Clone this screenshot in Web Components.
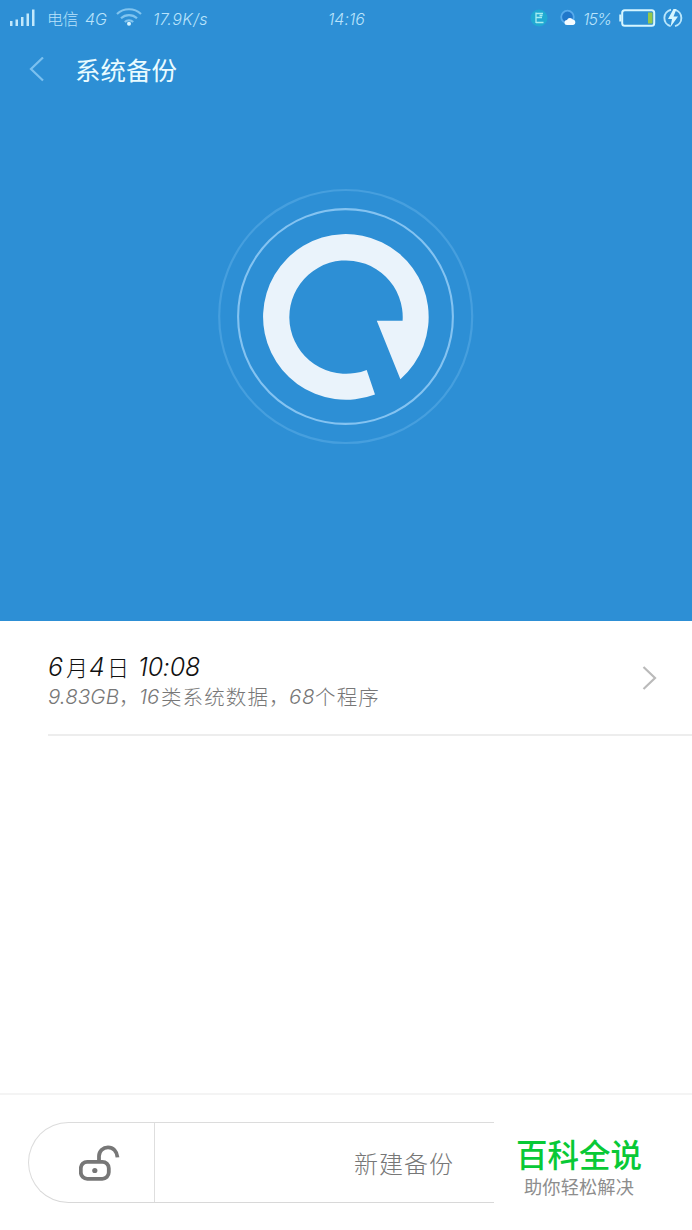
<!DOCTYPE html>
<html lang="zh-CN">
<head>
<meta charset="utf-8">
<title>系统备份</title>
<style>
	body {
		margin: 0;
		width: 692px;
		height: 1230px;
		overflow: hidden;
		background: #fff;
		font-family: "Open Sans", "Noto Sans CJK SC", sans-serif;
	}
</style>
</head>
<body>
<backup-app></backup-app>

<script>
(function() {
	function define(name, html, Base) {
		let tmpl = document.createElement('template');
		tmpl.innerHTML = html;
		customElements.define(name, class extends (Base || HTMLElement) {
			constructor() {
				super();
				this.attachShadow({ mode: 'open' }).appendChild(tmpl.content.cloneNode(true));
			}
		});
	}

	/* one run of text, spaced out to the width in its attribute */
	class TextRun extends HTMLElement {
		connectedCallback() {
			let width = Number(this.getAttribute('width'));
			let span = this.shadowRoot.querySelector('span');
			this.style.width = width + 'px';
			let count = Array.from(this.textContent).length;
			let extra = (width - span.getBoundingClientRect().width) / count;
			span.style.letterSpacing = extra + 'px';
		}
	}

	define('text-run', `
		<style>
			:host { display: block; flex: none; white-space: nowrap; font-weight: 300; }
			:host([latin]) { font-style: italic; font-family: Inter, "Open Sans", sans-serif; }
			span { display: inline-block; }
		</style>
		<span><slot></slot></span>
	`, TextRun);

	define('status-bar', `
		<style>
			:host {
				display: flex;
				align-items: center;
				height: 38px;
				padding: 0 10px;
				box-sizing: border-box;
				color: #b9e3fb;
				font-size: 16px;
				line-height: 38px;
			}
			svg { display: block; flex: none; }
			.left, .right { display: flex; align-items: center; }
			.left { width: 318px; }
			.right { margin-left: auto; }
		</style>
		<div class="left">
			<svg width="26" height="38" viewBox="0 0 26 38" fill="#c2e8fb">
				<path d="M0 21h2.500v5H0zM5.500 19.500H8V26H5.500zM11 17h2.500v9H11zM16.500 13.500H19V26h-2.500zM22 9.500h2.500V26H22z"/>
			</svg>
			<text-run width="31" style="margin-left:11px">电信</text-run>
			<text-run latin width="22" style="margin-left:7px">4G</text-run>
			<svg width="26" height="38" viewBox="0 0 26 38" fill="none" stroke="#80c4ef" stroke-width="2.200" style="margin-left:9px">
				<path d="M1 14a17.500 17.500 0 0 1 24 0M5 18.300a11.800 11.800 0 0 1 16 0M8.800 22a6.200 6.200 0 0 1 8.400 0"/>
				<circle cx="13" cy="23.700" r="2" fill="#d8f5ff" stroke="none"/>
			</svg>
			<text-run latin width="55" style="margin-left:11px">17.9K/s</text-run>
		</div>
		<text-run latin width="37">14:16</text-run>
		<div class="right">
			<svg width="18" height="38" viewBox="0 0 18 38">
				<circle cx="9" cy="18" r="8.500" fill="#20a9d2"/>
				<path d="M6 12.500v10.500M6 13.500h7M6 17.500h6M6 22.500h7.500M9.500 15.500h3" fill="none" stroke="#a5edf1" stroke-width="1.300"/>
			</svg>
			<svg width="18" height="38" viewBox="0 0 18 38" style="margin-left:11px">
				<circle cx="8.500" cy="17" r="6.300" fill="#2177ca" stroke="#58abec" stroke-width="1.800"/>
				<path d="M8 25a2.500 2.500 0 0 1 0-5 3.300 3.300 0 0 1 5.800-.5 2.800 2.800 0 0 1 .5 5.500z" fill="#f5fcff"/>
			</svg>
			<text-run latin width="28" style="margin-left:6px">15%</text-run>
			<svg width="37" height="38" viewBox="0 0 37 38" style="margin-left:8px">
				<rect x="3.200" y="10.200" width="32" height="15.600" rx="2.500" fill="none" stroke="#d6f6ff" stroke-width="2"/>
				<path d="M.3 14.500h2v7h-2z" fill="#d6f6ff"/>
				<path d="M29 12.500h4.500v11H29z" fill="#96c94a"/>
			</svg>
			<svg width="20" height="38" viewBox="0 0 20 38" style="margin-left:7px;margin-right:-1px">
				<path d="M8 9.800a8.400 8.400 0 0 0-.5 16.300M12 9.800a8.400 8.400 0 0 1 0 16.300" fill="none" stroke="#b9e6fb" stroke-width="1.900"/>
				<path d="M10.500 9l-5.500 10h4l-1.500 8 7.500-10.500h-4.500L13.500 9z" fill="#d6f6ff"/>
			</svg>
		</div>
	`);

	define('title-bar', `
		<style>
			:host {
				display: flex;
				align-items: center;
				height: 64px;
				padding-left: 29px;
				color: #e9fbff;
				font-size: 25.500px;
				line-height: 64px;
			}
			svg { margin-right: 31px; }
			text-run { font-weight: 400; }
		</style>
		<svg width="15" height="26" viewBox="0 0 15 26" fill="none" stroke="#7bc0ef" stroke-width="2.200">
			<path d="M14 .5L2 12l12 11.500"/>
		</svg>
		<text-run width="105"><slot></slot></text-run>
	`);

	define('backup-emblem', `
		<style>
			:host { display: flex; justify-content: center; padding-top: 78px; }
			svg { display: block; }
		</style>
		<svg width="272" height="270" viewBox="210 180 272 270">
			<circle cx="345.700" cy="316.500" r="126.500" fill="none" stroke="#469fde" stroke-width="2.200"/>
			<circle cx="345.500" cy="316.500" r="107.400" fill="none" stroke="#84c3f1" stroke-width="2.100"/>
			<path d="M402.600 320.800A56.700 56.700 0 1 0 366.700 369.900L375 394.400A82.800 82.800 0 1 1 400.400 379.200L376.800 320.800Z" fill="#eaf3fb"/>
		</svg>
	`);

	define('backup-item', `
		<style>
			:host {
				display: flex;
				align-items: center;
				justify-content: space-between;
				height: 115px;
				margin-left: 48px;
				padding-right: 35px;
				box-sizing: border-box;
				border-bottom: 2px solid #ededed;
			}
			.line { display: flex; }
			.date { color: #111; font-size: 25px; line-height: 31px; }
			.date text-run:not([latin]) { font-size: 22px; }
			.info { color: #777; font-size: 20.500px; line-height: 28px; }
			.text { padding-top: 7px; }
		</style>
		<div class="text">
			<div class="line date">
				<text-run latin width="16">6</text-run>
				<text-run width="23" style="margin-left:2px">月</text-run>
				<text-run latin width="16">4</text-run>
				<text-run width="24" style="margin-left:2px">日</text-run>
				<text-run latin width="62" style="margin-left:7px">10:08</text-run>
			</div>
			<div class="line info">
				<text-run latin width="71">9.83GB</text-run>
				<text-run width="20">，</text-run>
				<text-run latin width="20">16</text-run>
				<text-run width="108" style="margin-left:2px">类系统数据</text-run>
				<text-run width="20">，</text-run>
				<text-run latin width="26">68</text-run>
				<text-run width="65">个程序</text-run>
			</div>
		</div>
		<svg width="15" height="26" viewBox="0 0 15 26" fill="none" stroke="#bababa" stroke-width="2.200">
			<path d="M1.500 2L13 13 1.500 24"/>
		</svg>
	`);

	define('action-bar', `
		<style>
			:host {
				display: block;
				position: relative;
				margin-top: auto;
				height: 137px;
				padding: 27px 27px 0 28px;
				box-sizing: border-box;
				border-top: 2px solid #f4f4f4;
			}
			.pill {
				display: flex;
				height: 81px;
				box-sizing: border-box;
				border: 1px solid #dcdcdc;
				border-bottom-color: #d8d8d8;
				border-radius: 41px;
			}
			.lock {
				display: flex;
				align-items: center;
				width: 126px;
				box-sizing: border-box;
				border-right: 1px solid #dedede;
				padding-left: 50px;
			}
			.create {
				flex: 1;
				display: flex;
				align-items: center;
				padding-left: 199px;
				color: #777;
				font-size: 24px;
			}
			/* brand plate that lies over the right end of the pill */
			.brand {
				position: absolute;
				left: 494px;
				top: 23px;
				width: 198px;
				height: 96px;
				padding: 12px 0 0 22px;
				box-sizing: border-box;
				background: #fff;
				font-family: "Noto Sans CJK SC", sans-serif;
			}
			.name { color: #08c936; font-size: 31.500px; line-height: 46px; }
			.slogan { color: #8d8d8d; font-size: 18.200px; line-height: 20px; padding-left: 8px; }
			.slogan text-run { font-weight: 400; }
			.name text-run { font-weight: 500; }
		</style>
		<div class="pill">
			<div class="lock">
				<svg width="42" height="38" viewBox="79.500 1143.500 42 38" fill="none" stroke="#777" stroke-width="3.800">
					<rect x="81.300" y="1161.300" width="28" height="17" rx="6.500"/>
					<path d="M99.500 1161v-5.500c0-5 4-8.700 9-8.700s9 4 9.500 10"/>
					<circle cx="95.300" cy="1170" r="2.600" fill="#777" stroke="none"/>
				</svg>
			</div>
			<div class="create"><text-run width="100">新建备份</text-run></div>
		</div>
		<div class="brand">
			<div class="name"><text-run width="126">百科全说</text-run></div>
			<div class="slogan"><text-run width="110">助你轻松解决</text-run></div>
		</div>
	`);

	define('backup-app', `
		<style>
			:host { display: flex; flex-direction: column; width: 692px; height: 1230px; background: #fff; }
			header { height: 621px; background: #2d8fd5; }
		</style>
		<header>
			<status-bar></status-bar>
			<title-bar>系统备份</title-bar>
			<backup-emblem></backup-emblem>
		</header>
		<backup-item></backup-item>
		<action-bar></action-bar>
	`);
})();
</script>
</body>
</html>
